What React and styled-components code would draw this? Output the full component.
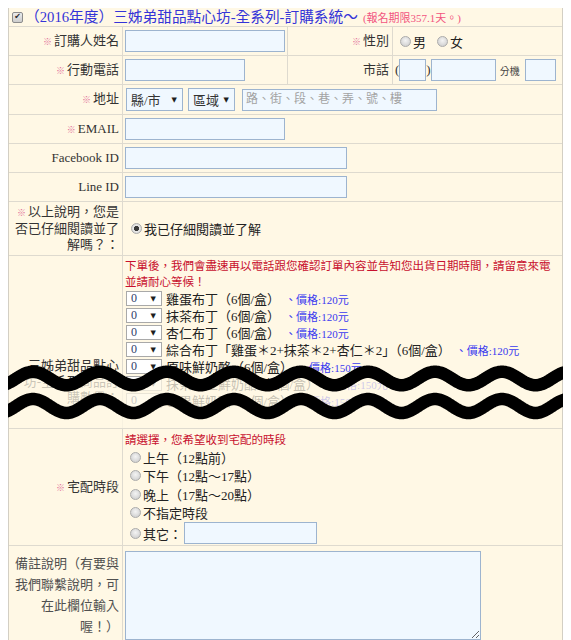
import React from 'react';
import styled, { createGlobalStyle } from 'styled-components';

const cream = '#fff8e5';

const Global = createGlobalStyle`
  *, *::before, *::after { box-sizing: border-box; }
  html, body { padding: 0; background: #fff; }
  body {
    margin: 8px;
    font-family: "Liberation Serif", "Noto Sans CJK TC", serif;
    font-size: 13px;
    color: #333;
  }
`;

const Page = styled.div`
  width: 555px;
`;

const Table = styled.div`
  display: flex;
  flex-direction: column;
  gap: 1px;
  background: #dedacf;
  border: 1px solid #d3cfc4;
  border-top: 0;
`;

const HeaderBar = styled.div`
  display: flex;
  align-items: center;
  gap: 2px;
  height: 18px;
  padding: 0 3px;
  background: ${cream};
`;

const Check = styled.input.attrs({ type: 'checkbox' })`
  appearance: none;
  margin: 0;
  width: 11px;
  height: 11px;
  flex: none;
  border: 1px solid #8c8c8c;
  border-radius: 2px;
  background: linear-gradient(#ececec, #cdcdcd);
  display: inline-grid;
  place-content: center;
  &::before {
    content: '✔';
    font-family: "DejaVu Sans", sans-serif;
    font-size: 8px;
    line-height: 1;
    color: #2a2a2a;
  }
`;

const Title = styled.span`
  font-size: 14.7px;
  line-height: 18px;
  color: #3434d8;
  white-space: nowrap;
`;

const Deadline = styled.span`
  font-size: 11px;
  color: #f2557f;
  margin-left: 3px;
`;

const Row = styled.div`
  display: grid;
  grid-template-columns: 113px 164px 104px 1fr;
  gap: 1px;
  position: relative;
`;

const Label = styled.div`
  background: ${cream};
  display: flex;
  align-items: ${(p) => p.$align || 'center'};
  justify-content: flex-end;
  text-align: right;
  padding: ${(p) => p.$pad || '2px 3px 2px 4px'};
  line-height: ${(p) => p.$lh || 16}px;
  color: ${(p) => (p.$muted ? '#505050' : '#333')};
`;

const Req = styled.span`
  font-size: 9px;
  color: #e27099;
  margin-right: 2px;
`;

const Value = styled.div`
  background: ${cream};
  grid-column: span ${(p) => p.$span || 1};
  display: ${(p) => (p.$block ? 'block' : 'flex')};
  align-items: center;
  gap: ${(p) => p.$gap || 0}px;
  padding: ${(p) => p.$pad || '3px 2px'};
  min-width: 0;
`;

const TextInput = styled.input.attrs({ type: 'text' })`
  width: ${(p) => p.$w}px;
  height: 22px;
  margin: 0 0 0 ${(p) => p.$ml || 0}px;
  padding: 0 3px;
  flex: none;
  border: 1px solid #9db4cf;
  background: #f0f8ff;
  font: inherit;
  font-size: 12px;
  color: #333;
  &::placeholder {
    color: #a3a3a3;
  }
`;

const Area = styled.textarea`
  width: 356px;
  height: 89px;
  margin: 1px 0 0;
  border: 1px solid #9db4cf;
  background: #f0f8ff;
  font: inherit;
`;

const Select = styled.div`
  display: inline-flex;
  align-items: center;
  justify-content: space-between;
  flex: none;
  width: ${(p) => p.$w}px;
  height: 23px;
  margin-left: ${(p) => p.$ml || 0}px;
  padding: 0 5px 0 4px;
  border: 1px solid #9db4cf;
  background: #f0f8ff;
  color: #333;
`;

const Arrow = styled.span`
  font-family: "DejaVu Sans", sans-serif;
  font-size: 7px;
  color: #1e1e1e;
`;

const Paren = styled.span`
  color: #333;
`;

const Tiny = styled.span`
  font-size: 10px;
  color: #444;
  margin: 0 5px 0 4px;
`;

const Choice = styled.label`
  display: inline-flex;
  align-items: center;
  gap: 2px;
  margin-left: ${(p) => p.$ml || 0}px;
  color: #222;
  white-space: nowrap;
`;

const Radio = styled.input.attrs({ type: 'radio' })`
  appearance: none;
  margin: 0;
  width: 11px;
  height: 11px;
  flex: none;
  border-radius: 50%;
  border: 1px solid #ababab;
  background: radial-gradient(circle at 50% 40%, #f4f4f4, #c8c8c8);
  &:checked {
    background: radial-gradient(circle, #3a3a3a 0 2.3px, #e9e9e9 2.9px, #cfcfcf 100%);
  }
`;

const Notice = styled.div`
  font-size: 11.5px;
  line-height: ${(p) => p.$lh || 15.5}px;
  color: #c8102e;
`;

const ProductLine = styled.div`
  display: flex;
  align-items: center;
  height: 17px;
  white-space: nowrap;
  color: #222;
`;

const Qty = styled.div`
  display: flex;
  align-items: center;
  justify-content: space-between;
  flex: none;
  width: 36px;
  height: 15px;
  margin: 0 4px 0 1px;
  padding: 0 5px 0 4px;
  border: 1px solid #a9a9a9;
  background: #fff;
  color: #2e3b68;
  font-size: 12px;
`;

const Price = styled.span`
  font-size: 11px;
  color: #3a3af0;
  margin-left: 5px;
`;

const OptionLine = styled.div`
  display: flex;
  align-items: center;
  height: ${(p) => p.$h || 18.5}px;
  padding-left: 5px;
`;

const Tear = styled.div`
  position: absolute;
  left: -9px;
  right: -9px;
  bottom: 0;
  height: 67px;
  pointer-events: none;
  z-index: 2;
  svg {
    display: block;
  }
`;

const PERIOD = 67;
const CREST = 33;

function wave(cy, amp, x0, x1) {
  let d = '';
  for (let x = x0; x <= x1 + 0.01; x += 1) {
    const y = cy - amp * Math.cos((2 * Math.PI * (x - CREST)) / PERIOD);
    d += (d ? ' L' : 'M') + x.toFixed(1) + ' ' + y.toFixed(2);
  }
  return d;
}

const products = [
  { name: '雞蛋布丁（6個/盒）', price: 120 },
  { name: '抹茶布丁（6個/盒）', price: 120 },
  { name: '杏仁布丁（6個/盒）', price: 120 },
  { name: '綜合布丁「雞蛋＊2+抹茶＊2+杏仁＊2」（6個/盒）', price: 120 },
  { name: '原味鮮奶酪（6個/盒）', price: 150 },
  { name: '抹茶紅豆鮮奶酪（6個/盒）', price: 150 },
  { name: '芒果鮮奶酪（6個/盒）', price: 150 },
];

const slots = ['上午（12點前）', '下午（12點～17點）', '晚上（17點～20點）', '不指定時段'];

function L({ req, children, ...rest }) {
  return (
    <Label {...rest}>
      <span>
        {req && <Req>※</Req>}
        {children}
      </span>
    </Label>
  );
}

function TearMark() {
  return (
    <Tear>
      <svg width="571" height="67" viewBox="0 0 571 67">
        <path d={wave(17.5, 6.75, 9, 562) + ' L562 67 L9 67 Z'} fill={cream} fillOpacity="0.74" />
        <path d={wave(17.5, 6.75, 0, 571)} fill="none" stroke="#000" strokeWidth="12.5" />
        <path d={wave(45, 7, 0, 571)} fill="none" stroke="#000" strokeWidth="12.5" />
      </svg>
    </Tear>
  );
}

export default function App() {
  return (
    <Page>
      <Global />
      <Table>
        <HeaderBar>
          <Check defaultChecked />
          <Title>（2016年度）三姊弟甜品點心坊-全系列-訂購系統～</Title>
          <Deadline>(報名期限357.1天。)</Deadline>
        </HeaderBar>

        <Row>
          <L req>訂購人姓名</L>
          <Value>
            <TextInput $w={160} />
          </Value>
          <L req>性別</L>
          <Value>
            <Choice $ml={5}>
              <Radio name="sex" />男
            </Choice>
            <Choice $ml={11}>
              <Radio name="sex" />女
            </Choice>
          </Value>
        </Row>

        <Row>
          <L req>行動電話</L>
          <Value>
            <TextInput $w={120} />
          </Value>
          <L>市話</L>
          <Value>
            <Paren>(</Paren>
            <TextInput $w={27} />
            <Paren>)</Paren>
            <TextInput $w={65} />
            <Tiny>分機</Tiny>
            <TextInput $w={31} />
          </Value>
        </Row>

        <Row>
          <L req>地址</L>
          <Value $span={3}>
            <Select $w={57} $ml={1}>
              縣/市<Arrow>▼</Arrow>
            </Select>
            <Select $w={47} $ml={5}>
              區域<Arrow>▼</Arrow>
            </Select>
            <TextInput $w={195} $ml={7} placeholder="路、街、段、巷、弄、號、樓" />
          </Value>
        </Row>

        <Row>
          <L req>EMAIL</L>
          <Value $span={3}>
            <TextInput $w={160} />
          </Value>
        </Row>

        <Row>
          <L>Facebook ID</L>
          <Value $span={3}>
            <TextInput $w={222} />
          </Value>
        </Row>

        <Row>
          <L>Line ID</L>
          <Value $span={3}>
            <TextInput $w={222} />
          </Value>
        </Row>

        <Row>
          <L req>以上說明，您是否已仔細閱讀並了解嗎？：</L>
          <Value $span={3}>
            <Choice $ml={6}>
              <Radio name="read" defaultChecked />
              我已仔細閱讀並了解
            </Choice>
          </Value>
        </Row>

        <Row>
          <L $align="flex-end" $pad="2px 3px 22px 4px">
            三姊弟甜品點心坊-全系列商品訂購數量：
          </L>
          <Value $span={3} $block $pad="3px 2px 19px">
            <Notice>
              下單後，我們會盡速再以電話跟您確認訂單內容並告知您出貨日期時間，請留意來電並請耐心等候！
            </Notice>
            {products.map((p) => (
              <ProductLine key={p.name}>
                <Qty>
                  0<Arrow>▼</Arrow>
                </Qty>
                {p.name}
                <Price>、價格:{p.price}元</Price>
              </ProductLine>
            ))}
          </Value>
          <TearMark />
        </Row>

        <Row>
          <L req>宅配時段</L>
          <Value $span={3} $block $pad="3px 2px 1px">
            <Notice $lh={16}>請選擇，您希望收到宅配的時段</Notice>
            {slots.map((s) => (
              <OptionLine key={s}>
                <Choice>
                  <Radio name="slot" />
                  {s}
                </Choice>
              </OptionLine>
            ))}
            <OptionLine $h={22}>
              <Choice>
                <Radio name="slot" />
                其它：
              </Choice>
              <TextInput $w={133} $ml={2} />
            </OptionLine>
          </Value>
        </Row>

        <Row>
          <L $lh={21} $muted $pad="2px 3px 2px 2px">備註說明（有要與我們聯繫說明，可在此欄位輸入喔！）</L>
          <Value $span={3} $pad="4px 2px 3px">
            <Area />
          </Value>
        </Row>
      </Table>
    </Page>
  );
}
